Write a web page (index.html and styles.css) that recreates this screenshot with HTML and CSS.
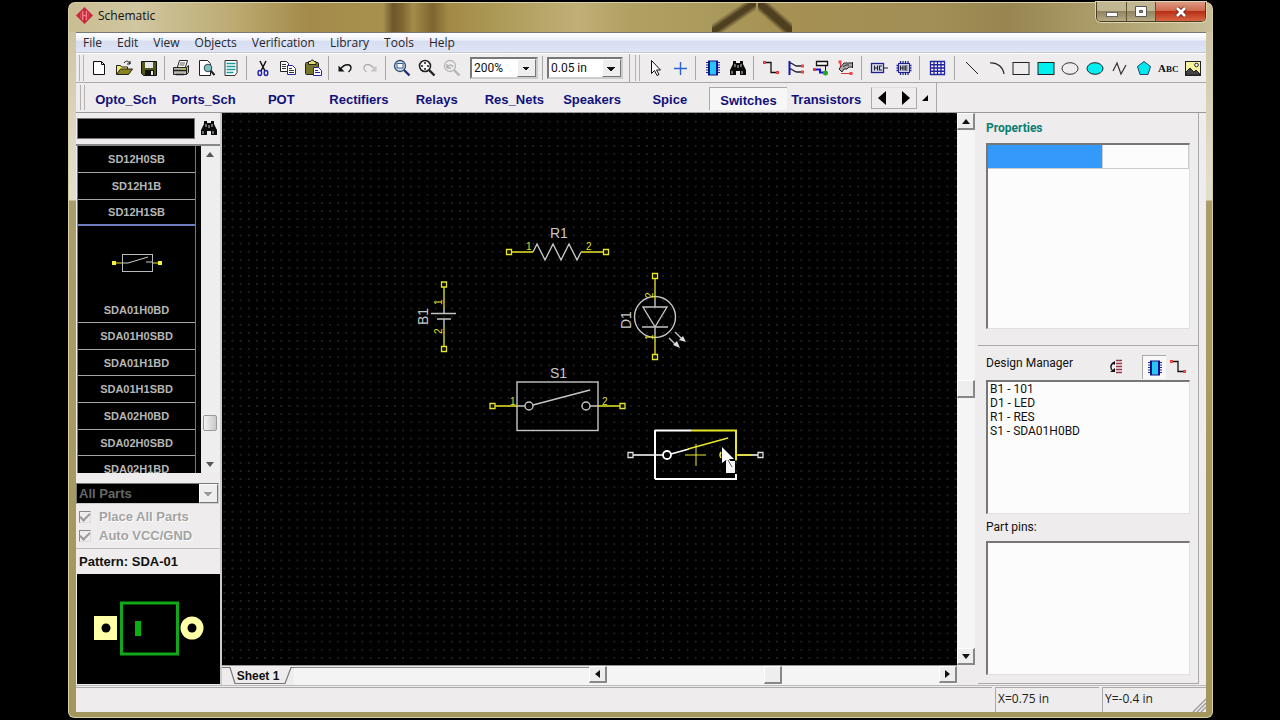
FILE: index.html
```html
<!DOCTYPE html>
<html lang="en">
<head>
<meta charset="utf-8">
<title>Schematic</title>
<link rel="stylesheet" href="styles.css">
</head>
<body>
<svg class="defs" aria-hidden="true">
  <symbol id="chip" viewBox="0 0 18 18"><path d="M2 3.500h14M2 6h14M2 8.500h14M2 11h14M2 13.500h14" stroke="#1c2a9c" stroke-width="1.200"/><rect x="4.500" y="2" width="9" height="14" fill="#12129c" stroke="#10107c"/><rect x="6" y="2.500" width="6" height="13" fill="#27c6f4"/></symbol>
  <symbol id="binoc" viewBox="0 0 18 18"><path d="M4 2h3v2h4V2h3v3l3 6v5h-6v-4H7v4H1v-5l3-6z" fill="#0b0b0b"/><path d="M3 12v3M13 12v3M6 5v3M12 5v3M9 6v3" stroke="#c7cccc"/></symbol>
  <symbol id="wire" viewBox="0 0 18 18"><path d="M4 3.500h5v10h5" fill="none" stroke="#111" stroke-width="1.300"/><path d="M1.500 2.500h2v2h-2zM14.500 12.500h2v2h-2z" fill="#f88" stroke="#d22"/></symbol>
</svg>
<main class="window">
  <header class="titlebar">
    <svg class="app-icon" viewBox="0 0 18 18"><path d="M9 0l9 9-9 9-9-9z" fill="#c9283a"/><path d="M7 4v10M11 4v10M7 9h4" stroke="#f07a86" stroke-width="1.500"/><path d="M5 6v6M13 6v6" stroke="#e04a5a"/></svg>
    <h1 class="title">Schematic</h1>
    <div class="caption">
      <button class="cap cap-min" aria-label="Minimize"><svg viewBox="0 0 16 12"><rect x="2.500" y="6.500" width="11" height="4" fill="#fff" stroke="#666"/></svg></button>
      <button class="cap cap-max" aria-label="Maximize"><svg viewBox="0 0 16 12"><path d="M2.500.5h11v10h-11zM6.500 4.500h3v2h-3z" fill="#fff" fill-rule="evenodd" stroke="#555"/></svg></button>
      <button class="cap cap-close" aria-label="Close"><svg viewBox="0 0 16 12"><path d="M4 2l8 8M12 2l-8 8" stroke="#5c2420" stroke-width="4.500"/><path d="M4 2l8 8M12 2l-8 8" stroke="#fff" stroke-width="2.800"/></svg></button>
    </div>
  </header>

  <div class="client">
    <nav class="menubar">
      <button>File</button><button>Edit</button><button>View</button><button>Objects</button><button>Verification</button><button>Library</button><button>Tools</button><button>Help</button>
    </nav>

    <div class="toolbar">
      <span class="grip"></span>
      <button class="tool" aria-label="New"><svg viewBox="0 0 18 18"><path d="M3.500 2.500h8l3 3v10h-11z" fill="#fff" stroke="#111"/><path d="M11.500 2.500v3h3" fill="none" stroke="#111"/></svg></button>
      <button class="tool" aria-label="Open"><svg viewBox="0 0 18 18"><path d="M1.500 15V6.500h4l1 1.500h6v2" fill="#f6ee6c" stroke="#222"/><path d="M1.500 15.500l4-5.500h12l-4 5.500z" fill="#8a8420" stroke="#222"/><path d="M9 4c2-3 5-2 6 1m0-3v3h-3" fill="none" stroke="#111"/></svg></button>
      <button class="tool" aria-label="Save"><svg viewBox="0 0 18 18"><path d="M1.500 2.500h15v14h-13l-2-2z" fill="#55561c" stroke="#111"/><rect x="5" y="3" width="8" height="6" fill="#e8e8e8"/><rect x="5" y="11" width="9" height="5" fill="#111"/><rect x="11" y="12" width="2" height="4" fill="#eee"/></svg></button>
      <span class="sep"></span>
      <button class="tool" aria-label="Print"><svg viewBox="0 0 18 18"><path d="M5.500 8l2-6.500h8l-2 6.500" fill="#fff" stroke="#222"/><path d="M8 4h5M7.500 6h5" stroke="#555"/><path d="M1.500 8.500h13v7h-13zM14.500 8.500l2-2v7l-2 2" fill="#b9b9ae" stroke="#222"/><path d="M2 11.500h12M4 15.500h8" stroke="#222" stroke-width="1.500"/><path d="M10 10h3" stroke="#c8c400"/></svg></button>
      <button class="tool" aria-label="Print preview"><svg viewBox="0 0 18 18"><path d="M2.500 1.500h8l3 3v12h-11z" fill="#fff" stroke="#222"/><circle cx="11" cy="9" r="3.800" fill="#7fc4c0" stroke="#345"/><path d="M13.500 11.500l4 4.500" stroke="#222" stroke-width="2"/></svg></button>
      <button class="tool" aria-label="Report"><svg viewBox="0 0 18 18"><path d="M3 1.500h12v12l-2 3H3z" fill="#fff" stroke="#333"/><path d="M4.500 4.500h9M4.500 7.500h9M4.500 10.500h9M4.500 13.500h7" stroke="#1a9c9c" stroke-width="1.500"/></svg></button>
      <span class="sep"></span>
      <button class="tool" aria-label="Cut"><svg viewBox="0 0 18 18"><path d="M6 2l5 10M12 2L7 12" stroke="#111" stroke-width="1.500"/><ellipse cx="5.800" cy="14" rx="1.800" ry="2.500" fill="none" stroke="#2525a8" stroke-width="1.400"/><ellipse cx="12" cy="14" rx="1.800" ry="2.500" fill="none" stroke="#2525a8" stroke-width="1.400"/></svg></button>
      <button class="tool" aria-label="Copy"><svg viewBox="0 0 18 18"><path d="M1.500 2.500h6l2 2v8h-8z" fill="#fff" stroke="#222"/><path d="M3 5.500h4M3 7.500h4M3 9.500h4" stroke="#333"/><path d="M8.500 6.500h5l3 3v6h-8z" fill="#fff" stroke="#2525a8"/><path d="M10 9.500h3M10 11.500h5M10 13.500h5" stroke="#333"/></svg></button>
      <button class="tool" aria-label="Paste"><svg viewBox="0 0 18 18"><rect x="1.500" y="3.500" width="13" height="12" rx="1" fill="#77752a" stroke="#222"/><path d="M4.500 5.500v-3h2l1-1.500h1.500L10 2.500h2v3z" fill="#e5dc70" stroke="#222"/><path d="M9.500 8.500h5l3 3v5h-8z" fill="#fff" stroke="#2525a8"/><path d="M11 11.500h3M11 13.500h5" stroke="#2525a8"/></svg></button>
      <span class="sep"></span>
      <button class="tool" aria-label="Undo"><svg viewBox="0 0 18 18"><path d="M5 9.500C9 4 15 5 15 9c0 2-1 3-2.500 4" fill="none" stroke="#111" stroke-width="1.400"/><path d="M2.500 6.500v6h6z" fill="#111"/></svg></button>
      <button class="tool" aria-label="Redo" disabled><svg viewBox="0 0 18 18"><path d="M13 9.500C9 4 3 5 3 9c0 2 1 3 2.500 4" fill="none" stroke="#aaa" stroke-width="1.200"/><path d="M15.500 6.500v6h-6z" fill="#c4c4c4"/></svg></button>
      <span class="sep"></span>
      <button class="tool" aria-label="Zoom window"><svg viewBox="0 0 18 18"><circle cx="7" cy="7" r="5.500" fill="#cfe0ee" stroke="#334a66" stroke-width="1.300"/><rect x="4" y="4.500" width="6" height="4.500" fill="#fff" stroke="#345a9a"/><path d="M11 11l5.500 5.500" stroke="#1c2f80" stroke-width="2.400"/></svg></button>
      <button class="tool" aria-label="Zoom extents"><svg viewBox="0 0 18 18"><circle cx="7" cy="7" r="5.500" fill="#f5f5f5" stroke="#222" stroke-width="1.600"/><path d="M7 3v2M7 9v2M3 7h2M9 7h2" stroke="#222" stroke-width="1.500"/><path d="M11 11l5.500 5.500" stroke="#222" stroke-width="2.400"/></svg></button>
      <button class="tool" aria-label="Zoom previous" disabled><svg viewBox="0 0 18 18"><circle cx="7" cy="7" r="5.500" fill="#eee" stroke="#b5b5b5" stroke-width="1.300"/><path d="M4 9V5m0 4h4M4 9c2-4 5-4 6-1" fill="none" stroke="#aaa" stroke-width="1.300"/><path d="M11 11l5.500 5.500" stroke="#b5b5b5" stroke-width="2.400"/></svg></button>
      <span class="combo combo-zoom"><select aria-label="Zoom"><option>200%</option></select></span>
      <span class="sep sep-mid"></span>
      <span class="combo combo-grid"><select aria-label="Grid step"><option>0.05 in</option></select></span>
      <span class="sep sep-wide"></span>
      <span class="grip"></span>
      <button class="tool" aria-label="Select"><svg viewBox="0 0 18 18"><path d="M5.500 1.500v13l3-3 2.500 5 2-1-2.500-4.500h4z" fill="#fff" stroke="#111"/></svg></button>
      <button class="tool" aria-label="Origin"><svg viewBox="0 0 18 18"><path d="M9.500 3v13M3 9.500h13" stroke="#2a62c8" stroke-width="1.400"/></svg></button>
      <span class="sep sep-edit"></span>
      <button class="tool" aria-label="Place component"><svg><use href="#chip"/></svg></button>
      <button class="tool" aria-label="Find component"><svg><use href="#binoc"/></svg></button>
      <span class="sep sep-edit"></span>
      <button class="tool" aria-label="Place wire"><svg><use href="#wire"/></svg></button>
      <button class="tool" aria-label="Place bus"><svg viewBox="0 0 18 18"><path d="M2.500 2v14" stroke="#1515b8" stroke-width="2"/><path d="M3 4c3 0 4 3 7 3h4M3 10c3 0 4 3 7 3h4" fill="none" stroke="#223" stroke-width="1.300"/><path d="M14 5.500h3v3h-3zM14 11.500h3v3h-3z" fill="#e44"/></svg></button>
      <button class="tool" aria-label="Bus connector"><svg viewBox="0 0 18 18"><path d="M4.500 2.500h11v4h-11z" fill="#fff" stroke="#111" stroke-width="1.300"/><path d="M13.500 7v5" stroke="#111"/><path d="M3 10.500h5v3h5" fill="none" stroke="#1919c8" stroke-width="2"/><path d="M1 9h3v3H1z" fill="#e33"/><circle cx="13.500" cy="14" r="2.500" fill="#1fa82a"/></svg></button>
      <button class="tool" aria-label="Edit net"><svg viewBox="0 0 18 18"><path d="M3.500 4v6M4 14.500h10" fill="none" stroke="#d33" stroke-width="1.200"/><path d="M2 10l5-6h8.500v4H12l-2 2H7l-2 3z" fill="#aaa" stroke="#222"/><path d="M6 8l3-2h3M15.500 3v6" fill="none" stroke="#222"/><path d="M1.500 1.500h3v3h-3zM12.500 13h3v3h-3z" fill="#e44"/></svg></button>
      <span class="sep sep-edit"></span>
      <button class="tool" aria-label="Hierarchy connector"><svg viewBox="0 0 18 18"><rect x="1.500" y="4.500" width="12" height="9" fill="#dfe2f4" stroke="#20208c" stroke-width="1.300"/><path d="M14 9h4M4.500 6.500v5M7.500 6.500v5M4.500 9h3M12 7H9.500v4H12" fill="none" stroke="#222" stroke-width="1.200"/></svg></button>
      <button class="tool" aria-label="Hierarchy block"><svg viewBox="0 0 18 18"><path d="M5.500 2v14M8 2v14M10.500 2v14M13 2v14M1.500 6.500h15M1.500 9h15M1.500 11.500h15" stroke="#20208c" stroke-width="1.300"/><rect x="3.500" y="4.500" width="11" height="9" fill="#cfd3ee" stroke="#20208c"/><path d="M5.500 6.500v5M8 6.500v5M5.500 9H8M12.500 7H10v4h2.500M10 9h2.500" fill="none" stroke="#222" stroke-width="1.200"/></svg></button>
      <span class="sep sep-edit"></span>
      <button class="tool" aria-label="Grid"><svg viewBox="0 0 18 18"><rect x="2.500" y="2.500" width="14" height="13" fill="#fff"/><path d="M2.500 2.500h14v13h-14zM6 2.500v13M9.500 2.500v13M13 2.500v13M2.500 5.750h14M2.500 9h14M2.500 12.250h14" fill="none" stroke="#22229a" stroke-width="1.300"/></svg></button>
      <span class="sep sep-last"></span>
      <div class="shapes">
        <button class="tool" aria-label="Line"><svg viewBox="0 0 18 18"><path d="M3 3l12 12" stroke="#222"/></svg></button>
        <button class="tool" aria-label="Arc"><svg viewBox="0 0 18 18"><path d="M2 4c7-1 13 4 14 11" fill="none" stroke="#222" stroke-width="1.200"/></svg></button>
        <button class="tool" aria-label="Rectangle"><svg viewBox="0 0 18 18"><rect x="1" y="3.500" width="16" height="12" fill="none" stroke="#222"/></svg></button>
        <button class="tool" aria-label="Filled rectangle"><svg viewBox="0 0 18 18"><rect x="1" y="3.500" width="16" height="12" fill="#00efef" stroke="#222"/></svg></button>
        <button class="tool" aria-label="Ellipse"><svg viewBox="0 0 18 18"><ellipse cx="9" cy="9.500" rx="8" ry="5.800" fill="none" stroke="#333"/></svg></button>
        <button class="tool" aria-label="Filled ellipse"><svg viewBox="0 0 18 18"><ellipse cx="9" cy="9.500" rx="8" ry="5.800" fill="#00efef" stroke="#222"/></svg></button>
        <button class="tool" aria-label="Polyline"><svg viewBox="0 0 18 18"><path d="M3 12l4-8 4 11 5-9" fill="none" stroke="#333" stroke-width="1.200"/></svg></button>
        <button class="tool" aria-label="Polygon"><svg viewBox="0 0 18 18"><path d="M9 2.500l6.500 5-2.500 8H5l-2.500-8z" fill="#00e8ec" stroke="#246"/></svg></button>
        <button class="tool tool-text">A<small>BC</small></button>
        <button class="tool" aria-label="Picture"><svg viewBox="0 0 18 18"><rect x="1.500" y="2.500" width="15" height="14" fill="#f8f2a0" stroke="#222"/><path d="M2 16v-3l4-4 4 4 2-2 4 4v1z" fill="#444" stroke="#222"/><circle cx="12.500" cy="6" r="1.800" fill="#fff" stroke="#222"/></svg></button>
      </div>
    </div>

    <div class="libs">
      <div class="libs-band">
        <span class="grip"></span>
        <div class="lib-tabs">
          <button>Opto_Sch</button><button>Ports_Sch</button><button>POT</button><button>Rectifiers</button><button>Relays</button><button>Res_Nets</button><button>Speakers</button><button>Spice</button><button class="active">Switches</button><button>Transistors</button>
        </div>
        <div class="pager"><button aria-label="Previous libraries"><svg viewBox="0 0 22 20"><path d="M14 3v14L6 10z"/></svg></button><button aria-label="Next libraries"><svg viewBox="0 0 22 20"><path d="M8 3v14l8-7z"/></svg></button></div>
        <button class="corner" aria-label="Library list"><svg viewBox="0 0 8 8"><path d="M7 1v6H1z"/></svg></button>
      </div>
    </div>

    <div class="work">
      <aside class="left">
        <div class="search"><input type="text" aria-label="Search parts"><button aria-label="Find"><svg><use href="#binoc"/></svg></button></div>
        <div class="parts">
          <ul class="part-list">
            <li>SD12H0SB</li><li>SD12H1B</li><li class="before">SD12H1SB</li>
            <li class="preview"><svg viewBox="0 0 50 22"><path d="M2 11h8M40 11h8" stroke="#e8e830"/><rect x="10.500" y="2.500" width="30" height="17" fill="none" stroke="#bbb"/><path d="M11 11h5l20-6M34 10h6" stroke="#ccc" fill="none"/><path d="M0 9h4v4H0zM46 9h4v4h-4z" fill="#f5f53a"/></svg><span>SDA01H0BD</span></li>
            <li>SDA01H0SBD</li><li>SDA01H1BD</li><li>SDA01H1SBD</li><li>SDA02H0BD</li><li>SDA02H0SBD</li><li>SDA02H1BD</li>
          </ul>
          <div class="mini-scroll"><button class="arrow-up" aria-label="Scroll up"></button><span class="space-long"></span><span class="mini-thumb"></span><span class="space"></span><button class="arrow-down" aria-label="Scroll down"></button></div>
        </div>
        <span class="combo combo-parts"><select aria-label="Part filter" disabled><option>All Parts</option></select></span>
        <div class="checks">
          <label><input type="checkbox" checked disabled>Place All Parts</label>
          <label><input type="checkbox" checked disabled>Auto VCC/GND</label>
        </div>
        <p class="pattern-name">Pattern: SDA-01</p>
        <div class="pattern"><svg viewBox="0 0 110 56"><rect x="0" y="15" width="23" height="24" fill="#ffffa8"/><circle cx="12" cy="27" r="4.500"/><circle cx="98" cy="27" r="11.500" fill="#ffffa8"/><circle cx="98" cy="27" r="4.500"/><rect x="27.500" y="2" width="56" height="51" fill="none" stroke="#10a818" stroke-width="3"/><rect x="41" y="20" width="6" height="15" fill="#08b010"/></svg></div>
      </aside>

      <section class="center">
        <div class="sheet">
          <svg class="canvas" role="img" aria-label="Schematic sheet">
            <defs><pattern id="dots" x="428.500" y="158.500" width="8.125" height="8.125" patternUnits="userSpaceOnUse"><rect x="4" y="4" width="1" height="1" fill="#6c6c6c"/></pattern></defs>
            <rect width="100%" height="100%" fill="url(#dots)"/>
            <g transform="translate(-222 -113)" fill="none">
              <g stroke="#c4c4c4" stroke-width="1.400">
                <path d="M533 252l4-8 8 16 8-16 8 16 8-16 8 16 4-8"/>
                <path d="M431 313.500h25M437 319h14"/>
                <path d="M444 309v4M444 319v7"/>
                <circle cx="655" cy="317" r="20.500"/><path d="M643 307h24l-12 20zM642 327h26M655 300v7M655 327v8"/>
                <path d="M669 338l7 7M675 332l8 8"/>
                <rect x="517" y="382" width="81" height="48.500"/>
                <path d="M517 406h8M533 405l57-15M590 406h8"/><circle cx="529" cy="406" r="4"/><circle cx="586" cy="406" r="4"/>
              </g>
              <path d="M680 348l-7-3 4-4zM686 342l-7-2 4-4z" fill="#ddd"/>
              <g stroke="#e6e62a" stroke-width="1.300">
                <path d="M511 252h22M581 252h23M444 287v22M444 326v21M655 279v21M655 335v19M495 406h22M598 406h22"/>
                <path d="M506.500 249.500h5v5h-5zM603.500 249.500h5v5h-5zM441.500 282h5v5h-5zM441.500 346.500h5v5h-5zM652.500 273.500h5v5h-5zM652.500 354.500h5v5h-5zM490 403.500h5v5h-5zM620 403.500h5v5h-5z"/>
              </g>
              <g stroke="#fff">
                <path d="M655 430.500h36M655 430v49M655 479h81v-5" stroke-width="2"/>
                <path d="M633 455h22M738 455h20M655 455h8M671 454l18-5" stroke-width="1.500"/>
                <circle cx="667" cy="455" r="4" stroke-width="1.800"/>
                <path d="M628 452.500h5v5h-5zM758 452.500h5v5h-5z" stroke="#ddd" stroke-width="1.300"/>
              </g>
              <g stroke="#e6e62a">
                <path d="M691 430.500h45v30" stroke-width="2"/><path d="M688 449l40-11M736 455h16M721 452q-2 3 0 6" stroke-width="1.500"/><path d="M696 444v22M685 455h21"/>
              </g>
              <g class="ref">
                <text x="550" y="238">R1</text><text x="550" y="378">S1</text>
                <text transform="translate(428 325) rotate(-90)">B1</text><text transform="translate(631 329) rotate(-90)">D1</text>
              </g>
              <g class="pin">
                <text x="526" y="250">1</text><text x="586" y="250">2</text><text x="510" y="405">1</text><text x="602" y="405">2</text>
                <text transform="translate(442 305) rotate(-90)">1</text><text transform="translate(442 334) rotate(-90)">2</text>
                <text transform="translate(653 298) rotate(-90)">2</text><text transform="translate(653 340) rotate(-90)">1</text>
              </g>
              <rect x="726" y="461" width="9" height="12" fill="#f4f4f4"/>
              <path d="M722 447v16l4-3 4 7 3-2-4-6h5z" fill="#fff"/><path d="M728 460l4 7" stroke="#555"/>
            </g>
          </svg>
          <div class="vscroll"><button class="arrow-up" aria-label="Scroll up"></button><span class="space"></span><span class="thumb"></span><span class="space"></span><button class="arrow-down" aria-label="Scroll down"></button></div>
        </div>
        <div class="sheet-foot">
          <button class="sheet-tab"><svg viewBox="0 0 72 19"><path d="M0 1.500h8l5 16h50l6-16h3" fill="none" stroke="#777" stroke-width="1.200"/></svg><span>Sheet 1</span></button>
          <span class="tab-rest"></span>
          <div class="hscroll"><button class="arrow-left" aria-label="Scroll left"></button><span class="space"></span><span class="thumb"></span><span class="space"></span><button class="arrow-right" aria-label="Scroll right"></button></div>
        </div>
      </section>

      <aside class="right">
        <section class="props">
          <h2>Properties</h2>
          <div class="well well-props"><table><tbody><tr><td class="picked"></td><td></td></tr></tbody></table></div>
        </section>
        <section class="manager">
          <div class="manager-head"><h3>Design Manager</h3>
            <button aria-label="Sort"><svg viewBox="0 0 18 18"><path d="M9 2.500h6M9 5.500h6M9 8.500h6M9 11.500h6M9 14.500h6" stroke="#943848" stroke-width="1.500"/><path d="M7 5C3 6 3 11 6 13" fill="none" stroke="#111" stroke-width="1.400"/><path d="M8 3v4L5 5zM3 14h5v-4z" fill="#111"/></svg></button>
            <button class="pressed" aria-label="Components"><svg><use href="#chip"/></svg></button>
            <button class="net" aria-label="Nets"><svg><use href="#wire"/></svg></button>
          </div>
          <ul class="well well-list"><li>B1 - 101</li><li>D1 - LED</li><li>R1 - RES</li><li>S1 - SDA01H0BD</li></ul>
          <h3 class="pins-title">Part pins:</h3>
          <div class="well well-pins"></div>
        </section>
      </aside>
    </div>

    <footer class="status"><span class="cell cell-main"></span><span class="cell">X=0.75 in</span><span class="cell cell-last">Y=-0.4 in<svg viewBox="0 0 14 14"><path d="M1 14L14 1M5 14l9-9M9 14l5-5" stroke="#999" stroke-width="1.300"/></svg></span></footer>
  </div>
</main>
</body>
</html>
```
FILE: styles.css
```css
* { box-sizing: border-box; }
body { margin: 0; min-height: 100vh; padding: 2px 67px 2px 68px; background: #000; display: flex; font-family: "Liberation Sans", Arial, sans-serif; font-size: 12px; color: #111; }
button { border: 0; padding: 0; background: none; font: inherit; color: inherit; display: flex; align-items: center; justify-content: center; }
ul, p, h1, h2, h3 { margin: 0; padding: 0; list-style: none; font-weight: normal; }
.defs { position: absolute; width: 0; height: 0; }

.window { flex: 1; min-width: 0; display: flex; flex-direction: column; padding: 0 7px 6px 8px; border-radius: 7px 7px 6px 6px; box-shadow: inset 0 0 0 1px #d8d0a4;
  background:
    linear-gradient(to bottom right, transparent 36%, #4d3f20 46%, #4d3f20 54%, transparent 64%) 644px 0 / 44px 30px no-repeat,
    linear-gradient(to bottom left, transparent 34%, #4d3f20 44%, #4d3f20 56%, transparent 66%) 690px 0 / 34px 30px no-repeat,
    linear-gradient(90deg, #c9bd92 0, #d0c69f 70px, #bba970 170px, #a38a4a 240px, #a8914f 315px, #6c562c 325px, #806832 335px, #a48c4c 345px, #7d642f 365px, #a28945 380px, #ac9a57 430px, #c0b077 510px, #b0a062 560px, #aa9a5d 640px, #a69053 720px, #a18f56 860px, #978650 940px, #b3a574 1060px, #c9bf9a 100%) 0 0 / 100% 30px no-repeat,
    linear-gradient(#c9bf9a 0, #e0dbc8 150px, #e3dfcd 198px, #aa9d6c 199px, #a89a60 400px, #a3965e 100%); }
.titlebar { height: 30px; display: flex; align-items: flex-start; }
.app-icon { width: 17px; height: 17px; margin: 5px 5px 0 0; }
.title { flex: 1; font-family: "Open Sans", sans-serif; font-size: 12px; line-height: 28px; }
.caption { display: flex; border: 1px solid #4b4027; border-top: 0; border-radius: 0 0 5px 5px; overflow: hidden; box-shadow: 0 0 0 1px #ddd3ac; }
.cap { height: 19px; background: linear-gradient(#c0b692 45%, #8f8460 50%, #b5aa82); border-right: 1px solid #5c5134; }
.cap svg { width: 16px; height: 12px; }
.cap-min { width: 30px; }
.cap-max { width: 29px; }
.cap-close { width: 49px; border-right: 0; background: linear-gradient(#dc9a86 0, #cf6a4c 45%, #b83016 50%, #d86442); }

.client { flex: 1; min-height: 0; display: flex; flex-direction: column; background: #eeecec; border-top: 1px solid #777; }
.menubar { height: 20px; display: flex; padding-left: 7px; gap: 15px; background: linear-gradient(#fff 0, #eef1f9 35%, #d7def0 45%, #dfe5f5); border-bottom: 1px solid #c5c7d0; font-family: "Open Sans", sans-serif; font-size: 12px; color: #26262e; }

.toolbar { height: 30px; display: flex; align-items: center; border-bottom: 1px solid #a9a9a9; border-top: 1px solid #fff; padding-left: 3px; }
.grip { flex: none; width: 5px; height: 26px; margin-right: 2px; border: 1px solid #b2b2b2; border-width: 0 1px; }
.tool { flex: none; width: 25px; height: 26px; }
.tool svg, .search svg, .manager-head svg { width: 18px; height: 18px; }
.sep { flex: none; width: 1px; height: 24px; margin: 0 3px; background: #a8a8a8; }
.sep-edit { margin: 0 4px 0 3px; }
.sep-mid { margin: 0 4px; }
.sep-wide { margin: 0 5px 0 6px; height: 28px; }
.sep-last { margin: 0 5px; }
.shapes { flex: none; width: 245px; display: flex; }
.shapes .tool { flex: 1; width: auto; }
.tool-text { font: bold 11px "Liberation Serif", serif; }
.tool-text small { font-size: 9px; padding-top: 2px; }

.combo { flex: none; position: relative; display: flex; height: 22px; background: #fff; border: 2px solid #777; border-right-color: #ccc; border-bottom-color: #ccc; }
.combo select { flex: 1; min-width: 0; appearance: none; border: 0; padding: 0 2px; background: none; color: #111; font: 12px Roboto, sans-serif; opacity: 1; }
.combo::after { content: ""; width: 17px; pointer-events: none; background: linear-gradient(45deg, transparent 50%, #111 50%) 4px 7px / 4px 4px no-repeat, linear-gradient(315deg, transparent 50%, #111 50%) 8px 7px / 4px 4px no-repeat, #eee; border: 1px solid #fff; border-right-color: #777; border-bottom-color: #777; }
.combo-zoom { width: 68px; margin-left: 6px; }
.combo-grid { width: 76px; }

.libs { height: 30px; display: flex; border-bottom: 1px solid #999; }
.libs-band { display: flex; align-items: center; padding: 0 7px 0 4px; border-right: 1px solid #aaa; color: #11117c; }
.libs-band .grip { height: 25px; }
.lib-tabs { width: 778px; display: flex; align-self: stretch; font-weight: bold; font-size: 13px; }
.lib-tabs button { flex: 1 1 0; min-width: 0; white-space: nowrap; padding-top: 3px; }
.lib-tabs .active { margin: 4px 0 2px; padding-top: 2px; background: #f7f7f7; border: 1px solid #aaa; border-width: 1px 0 0 1px; }
.pager { display: flex; margin-left: 6px; border: 1px solid #aaa; border-top-color: #ddd; }
.pager svg { display: block; width: 22px; height: 20px; }
.corner { width: 8px; margin-left: 4px; }
.corner svg { width: 8px; height: 8px; }

.work { flex: 1; min-height: 0; display: flex; }
.left { flex: none; width: 146px; display: flex; flex-direction: column; border-right: 2px solid #ccc; }
.search { display: flex; height: 33px; padding: 5px 0 7px 1px; border-bottom: 2px solid #888; }
.search input { width: 118px; height: 21px; background: #000; color: #ccc; border: 1px solid #777; padding: 0 3px; }
.search button { margin-left: 5px; }
.parts { flex: 1; min-height: 0; overflow: hidden; display: flex; background: #eee; contain: size; }
.part-list { width: 119px; margin-left: 1px; background: #000; color: #b6b6b6; font-weight: bold; font-size: 11px; border: 1px solid #777; border-width: 0 1px; }
.part-list li { height: 27px; border-bottom: 1px solid #a5a5a5; display: flex; align-items: center; justify-content: center; }
.part-list li:nth-child(3n) { height: 26px; }
.part-list .before { border-bottom: 2px solid #6c7fbd; }
.part-list .preview { height: 97px; flex-direction: column; justify-content: flex-end; gap: 30px; padding-bottom: 6px; }
.preview svg { width: 50px; height: 22px; }
.mini-scroll { flex: 1; display: flex; flex-direction: column; align-items: stretch; border-left: 5px solid #000; }
.mini-thumb { height: 16px; margin: 0 3px 0 2px; background: linear-gradient(90deg, #f4f4f4, #c9c9c9); border: 1px solid #999; border-radius: 2px; }
.space { flex: 1; }
.space-long { flex: 10; }
.arrow-up, .arrow-down, .arrow-left, .arrow-right { flex: none; width: 18px; height: 17px; }
.arrow-up::before, .arrow-down::before, .arrow-left::before, .arrow-right::before { content: ""; border: 4px solid transparent; }
.arrow-up::before { border-top: 0; border-bottom: 5px solid #111; }
.arrow-down::before { border-bottom: 0; border-top: 5px solid #111; }
.arrow-left::before { border-left: 0; border-right: 5px solid #111; }
.arrow-right::before { border-right: 0; border-left: 5px solid #111; }
.mini-scroll .arrow-up::before { border-bottom-color: #555; }
.mini-scroll .arrow-down::before { border-top-color: #555; }
.combo-parts { margin: 10px 1px 0 0; height: 21px; background: #000; border-width: 1px; }
.combo-parts select { color: #666; font: bold 13px "Liberation Sans", sans-serif; }
.combo-parts::after { background: linear-gradient(45deg, transparent 50%, #999 50%) 4px 7px / 4px 4px no-repeat, linear-gradient(315deg, transparent 50%, #999 50%) 8px 7px / 4px 4px no-repeat, #eee; }
.checks { padding: 3px 0; color: #a3a3a3; font-weight: bold; font-size: 13px; border-bottom: 1px solid #bbb; }
.checks label { display: flex; align-items: center; height: 19px; text-shadow: 1px 1px 0 #fff; }
.checks input { appearance: none; width: 12px; height: 12px; margin: 0 8px 0 3px; border: 1px solid #888; border-right-color: #ddd; border-bottom-color: #ddd; display: flex; align-items: center; justify-content: center; }
.checks input::before { content: ""; width: 8px; height: 4px; margin-bottom: 2px; border: 2px solid #999; border-width: 0 0 2px 2px; rotate: -45deg; }
.pattern-name { padding: 1px 3px 0; line-height: 24px; font-weight: bold; font-size: 13px; color: #111; white-space: nowrap; }
.pattern { height: 110px; margin: 0 0 1px 1px; background: #000; display: flex; align-items: center; justify-content: center; }
.pattern svg { width: 110px; height: 56px; }

.center { flex: 1; min-width: 0; display: flex; flex-direction: column; }
.sheet { flex: 1; min-height: 0; display: flex; }
.canvas { flex: 1; min-width: 0; height: 100%; background: #000; }
.ref { fill: #c8c8c8; font-size: 14px; }
.pin { fill: #dede2c; font-size: 10px; }
.vscroll { flex: none; width: 18px; display: flex; flex-direction: column; background: #f6f5f5; }
.hscroll { flex: none; width: 368px; display: flex; background: #f6f5f5; }
.vscroll button, .hscroll button, .thumb { background: #efeeee; border: 1px solid #fff; border-right: 2px solid #888; border-bottom: 2px solid #888; }
.thumb { width: 18px; height: 18px; }
.sheet-foot { height: 20px; display: flex; border-top: 1px solid #999; margin-right: 18px; }
.sheet-tab { position: relative; width: 72px; height: 19px; font-weight: bold; font-size: 12px; }
.sheet-tab svg { position: absolute; inset: 0; }
.sheet-tab span { position: relative; }
.tab-rest { flex: 1; border-top: 1px solid #888; margin-top: 1px; background: #f5f4f4; }

.right { flex: none; width: 221px; margin: 0 7px 1px 3px; display: flex; flex-direction: column; border-right: 1px solid #aaa; border-bottom: 1px solid #aaa; font-family: Roboto, sans-serif; }
.props { padding: 7px 8px 16px; border-bottom: 1px solid #aaa; }
.props h2 { color: #0c7f74; font-weight: bold; font-size: 12px; line-height: 17px; margin-bottom: 6px; }
.well { background: #fdfcfd; border: 2px solid #777; border-right: 1px solid #e0e0e0; border-bottom: 1px solid #e0e0e0; }
.well-props { height: 186px; }
.well table { width: 100%; border-collapse: collapse; }
.well td { height: 23px; padding: 0; border: 1px solid #ccc; border-width: 0 1px 1px 0; }
.well .picked { width: 57%; background: #3399fb; }
.manager { flex: 1; padding: 8px; display: flex; flex-direction: column; }
.manager-head { display: flex; height: 26px; align-items: center; }
.manager h3 { font-size: 12px; line-height: 18px; }
.manager-head h3 { flex: 1; align-self: flex-start; }
.manager-head button { width: 24px; height: 24px; }
.manager-head .pressed { margin-left: 14px; background: #f8f8f8; border: 1px solid #aaa; border-width: 1px 0 0 1px; }
.well-list { height: 134px; padding-left: 2px; line-height: 14px; }
.manager .pins-title { line-height: 27px; }
.well-pins { flex: 1; }

.status { height: 27px; display: flex; gap: 3px; padding-top: 1px; border-top: 1px solid #bbb; font-family: "Open Sans", sans-serif; font-size: 12px; line-height: 21px; color: #222; }
.cell { width: 104px; padding-left: 2px; border-top: 1px solid #aaa; border-left: 1px solid #aaa; }
.cell-main { flex: 1; border-left: 0; }
.cell-last { display: flex; justify-content: space-between; }
.cell-last svg { width: 14px; height: 14px; align-self: flex-end; }
```
